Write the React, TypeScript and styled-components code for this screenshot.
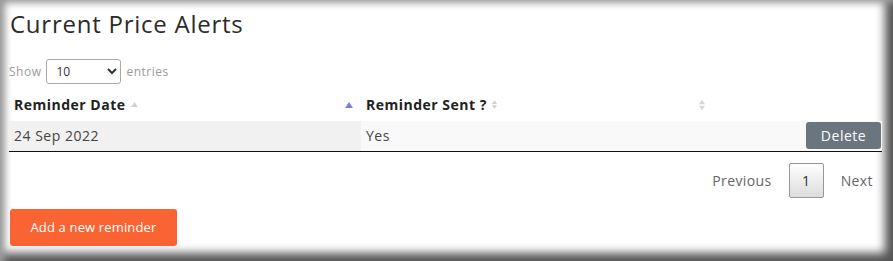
import React from 'react';
import styled, { createGlobalStyle } from 'styled-components';

const GlobalStyle = createGlobalStyle`
  html, body {
    margin: 0;
    padding: 0;
    background: #fff;
  }
  * {
    box-sizing: border-box;
  }
`;

const FONT = `"Open Sans", "DejaVu Sans", sans-serif`;

function SortUp({ color, size = 7 }: { color: string; size?: number }) {
  return (
    <svg width={size} height={size * 0.75} viewBox="0 0 8 6">
      <path d="M4 0 L8 6 L0 6 Z" fill={color} />
    </svg>
  );
}

function SortBoth({ color, w = 6, h = 11 }: { color: string; w?: number; h?: number }) {
  return (
    <svg width={w} height={h} viewBox="0 0 8 14">
      <path d="M4 0 L8 6 L0 6 Z" fill={color} />
      <path d="M4 14 L8 8 L0 8 Z" fill={color} />
    </svg>
  );
}

function App() {
  return (
    <>
      <GlobalStyle />
      <Frame>
        <Title>Current Price Alerts</Title>
        <LengthRow>
          <span>Show</span>
          <Select defaultValue="10">
            <option value="10">10</option>
            <option value="25">25</option>
            <option value="50">50</option>
            <option value="100">100</option>
          </Select>
          <span>entries</span>
        </LengthRow>
        <Table>
          <colgroup>
            <col style={{ width: 352 }} />
            <col style={{ width: 352 }} />
            <col />
          </colgroup>
          <thead>
            <tr>
              <Th>
                <HeadLabel>
                  Reminder Date <SortUp color="#d0d0d0" size={7} />
                </HeadLabel>
                <SortMark>
                  <SortUp color="#7a7ae0" size={8} />
                </SortMark>
              </Th>
              <Th>
                <HeadLabel>
                  Reminder Sent ? <SortBoth color="#cfcfcf" w={5} h={9} />
                </HeadLabel>
                <SortMark>
                  <SortBoth color="#d6d6d6" />
                </SortMark>
              </Th>
              <Th />
            </tr>
          </thead>
          <tbody>
            <tr>
              <Td sorted>24 Sep 2022</Td>
              <Td>Yes</Td>
              <Td align="right">
                <DeleteButton>Delete</DeleteButton>
              </Td>
            </tr>
          </tbody>
        </Table>
        <Pager>
          <PageLink>Previous</PageLink>
          <PageCurrent>1</PageCurrent>
          <PageLink>Next</PageLink>
        </Pager>
        <AddButton>Add a new reminder</AddButton>
      </Frame>
    </>
  );
}

export default App;

const Frame = styled.div`
  width: 893px;
  height: 261px;
  padding: 8px 11px 0 9px;
  font-family: ${FONT};
  color: #333;
  background: #fff;
  overflow: hidden;
  box-shadow: inset 8px 6px 7px -3px #999, inset -12px -12px 10px -4px #555;
`;

const Title = styled.h2`
  margin: 0 0 0 1px;
  font-size: 24px;
  font-weight: 400;
  line-height: 32px;
  letter-spacing: 0.75px;
  color: #2b2b2b;
`;

const LengthRow = styled.div`
  display: flex;
  align-items: center;
  gap: 5px;
  margin-top: 19px;
  height: 25px;
  font-size: 12px;
  letter-spacing: 0.5px;
  color: #9a9a9a;
`;

const Select = styled.select`
  width: 75px;
  height: 25px;
  border: 1px solid #aaa;
  border-radius: 3px;
  background: #fff;
  font-family: ${FONT};
  font-size: 12px;
  color: #333;
  padding: 0 5px;
`;

const Table = styled.table`
  width: 873px;
  margin-top: 4px;
  border-collapse: collapse;
  table-layout: fixed;
  border-bottom: 1px solid #111;
  font-size: 14px;
  letter-spacing: 0.5px;
`;

const Th = styled.th`
  position: relative;
  height: 33px;
  padding: 0 5px;
  text-align: left;
  font-weight: 700;
  color: #222;
`;

const HeadLabel = styled.span`
  display: inline-flex;
  align-items: center;
  gap: 5px;
`;

const SortMark = styled.span`
  position: absolute;
  right: 8px;
  top: 50%;
  transform: translateY(-50%);
  display: flex;
`;

const Td = styled.td<{ sorted?: boolean }>`
  height: 30px;
  padding: 0 5px;
  background: ${(p) => (p.sorted ? '#f1f1f1' : '#f9f9f9')};
  color: #444;
  vertical-align: middle;
  padding-right: ${(p) => (p.align === 'right' ? '1px' : '5px')};
`;

const DeleteButton = styled.button`
  width: 75px;
  height: 27px;
  border: none;
  border-radius: 3px;
  background: #6b757e;
  color: #fff;
  font-family: ${FONT};
  font-size: 14px;
  letter-spacing: 0.5px;
  cursor: pointer;
`;

const Pager = styled.div`
  display: flex;
  justify-content: flex-end;
  align-items: center;
  gap: 17px;
  margin-top: 11px;
  padding-right: 9px;
  height: 35px;
  font-size: 14px;
  letter-spacing: 0.4px;
`;

const PageLink = styled.span`
  color: #666;
`;

const PageCurrent = styled.span`
  width: 35px;
  height: 35px;
  display: flex;
  align-items: center;
  justify-content: center;
  border: 1px solid #979797;
  border-radius: 2px;
  background: linear-gradient(to bottom, #fff 0%, #dcdcdc 100%);
  color: #333;
`;

const AddButton = styled.button`
  display: block;
  margin-top: 11px;
  margin-left: 1px;
  width: 167px;
  height: 37px;
  border: none;
  border-radius: 3px;
  background: #fa6432;
  color: #fff;
  font-family: ${FONT};
  font-size: 13px;
  letter-spacing: 0.15px;
  cursor: pointer;
`;
